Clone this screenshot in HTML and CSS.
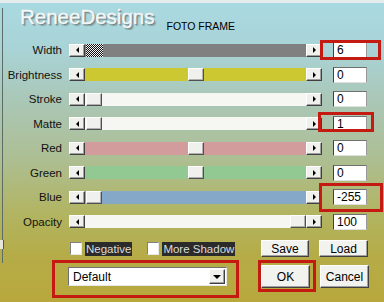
FILE: index.html
```html
<!DOCTYPE html>
<html>
<head>
<meta charset="utf-8">
<link rel="stylesheet" href="styles.css">
</head>
<body>
<div class="dialog">
  <div class="topstrip"></div>
  <div class="header">
    <span class="brand">ReneeDesigns</span>
    <span class="subtitle">FOTO FRAME</span>
  </div>
  <div class="sliders">
    <div class="row">
      <span class="lbl">Width</span>
      <div class="slider"><span class="arrow left"></span><div class="track t-gray"><span class="thumb checker" style="margin-left:1px"></span></div><span class="arrow right"></span></div>
      <span class="field">6</span>
    </div>
    <div class="row">
      <span class="lbl">Brightness</span>
      <div class="slider"><span class="arrow left"></span><div class="track t-yellow"><span class="thumb" style="margin-left:103px"></span></div><span class="arrow right"></span></div>
      <span class="field">0</span>
    </div>
    <div class="row">
      <span class="lbl">Stroke</span>
      <div class="slider"><span class="arrow left"></span><div class="track t-white"><span class="thumb" style="margin-left:1px"></span></div><span class="arrow right"></span></div>
      <span class="field">0</span>
    </div>
    <div class="row">
      <span class="lbl">Matte</span>
      <div class="slider"><span class="arrow left"></span><div class="track t-white"><span class="thumb" style="margin-left:1px"></span></div><span class="arrow right"></span></div>
      <span class="field">1</span>
    </div>
    <div class="row">
      <span class="lbl">Red</span>
      <div class="slider"><span class="arrow left"></span><div class="track t-red"><span class="thumb" style="margin-left:103px"></span></div><span class="arrow right"></span></div>
      <span class="field">0</span>
    </div>
    <div class="row">
      <span class="lbl">Green</span>
      <div class="slider"><span class="arrow left"></span><div class="track t-green"><span class="thumb" style="margin-left:103px"></span></div><span class="arrow right"></span></div>
      <span class="field">0</span>
    </div>
    <div class="row">
      <span class="lbl">Blue</span>
      <div class="slider"><span class="arrow left"></span><div class="track t-blue"><span class="thumb" style="margin-left:1px"></span></div><span class="arrow right"></span></div>
      <span class="field">-255</span>
    </div>
    <div class="row">
      <span class="lbl">Opacity</span>
      <div class="slider"><span class="arrow left"></span><div class="track t-white"><span class="thumb" style="margin-left:205px"></span></div><span class="arrow right"></span></div>
      <span class="field">100</span>
    </div>
  </div>
  <div class="options">
    <div class="checks">
      <span class="check"><span class="box"></span><span class="clabel">Negative</span></span>
      <span class="check"><span class="box"></span><span class="clabel">More Shadow</span></span>
    </div>
    <div class="btns">
      <span class="btn">Save</span>
      <span class="btn">Load</span>
    </div>
  </div>
  <div class="actions">
    <div class="combo">
      <span class="combo-text">Default</span>
      <span class="combo-btn"><span class="tri-down"></span></span>
    </div>
    <div class="btns big">
      <span class="btn">OK</span>
      <span class="btn">Cancel</span>
    </div>
  </div>
  <div class="mark m-width"></div>
  <div class="mark m-matte"></div>
  <div class="mark m-blue"></div>
  <div class="mark m-combo"></div>
  <div class="mark m-ok"></div>
</div>
</body>
</html>
```
FILE: styles.css
```css
* { box-sizing: border-box; }
html, body { margin: 0; padding: 0; }
body {
  font-family: "Liberation Sans", Arial, sans-serif;
  font-size: 11px;
  color: #000;
}
.dialog {
  position: relative;
  width: 384px;
  height: 302px;
  overflow: hidden;
  background: linear-gradient(to bottom,
    #a9dae2 0px, #a9d3d6 50px, #aac6b4 105px, #adbe92 160px,
    #b1b564 210px, #b5ac48 255px, #b8a83c 302px);
}
.dialog::before {
  content: "";
  position: absolute;
  left: 2px; top: 8px;
  width: 1px; height: 255px;
  background: #5c6c66;
}
.dialog::after {
  content: "";
  position: absolute;
  left: 0; top: 240px;
  width: 3px; height: 9px;
  background: #e6e6dc;
  border-right: 1px solid #555;
}
.topstrip {
  height: 3px;
  background: #e4ecec;
}
.header {
  display: flex;
  align-items: flex-start;
  height: 34.75px;
  padding: 3px 0 0 20px;
}
.brand {
  font-size: 20.5px;
  line-height: 22px;
  color: #f6f9f9;
  -webkit-text-stroke: 0.4px #eef3f3;
  text-shadow: 1px 1px 0 #6f7f7f, 2px 2px 1px rgba(60,70,70,0.35);
}
.subtitle {
  margin: 14px 0 0 12px;
  font-size: 10.5px;
  line-height: 12px;
}
.sliders { display: flex; flex-direction: column; }
.row {
  display: flex;
  align-items: center;
  height: 24.5px;
}
.lbl {
  width: 62px;
  margin-right: 7px;
  text-align: right;
  color: #111;
  font-size: 11.5px;
}
.slider {
  width: 253px;
  height: 13px;
  margin-right: 11px;
  display: flex;
}
.arrow {
  width: 16px;
  height: 13px;
  background: #f0f0ec;
  border: 1px solid;
  border-color: #fff #404040 #404040 #fff;
  box-shadow: inset -1px -1px #a0a0a0;
  display: flex;
  align-items: center;
  justify-content: center;
}
.arrow::before {
  content: "";
  width: 0; height: 0;
  border-top: 3px solid transparent;
  border-bottom: 3px solid transparent;
}
.arrow.left::before { border-right: 3px solid #000; }
.arrow.right::before { border-left: 3px solid #000; }
.track {
  flex: 1;
  height: 13px;
  display: flex;
}
.t-gray { background: #808080; }
.t-yellow { background: #cbc832; }
.t-white { background: #f6f6f2; }
.t-red { background: #d29c9c; }
.t-green { background: #92c892; }
.t-blue { background: #86a8c8; }
.thumb {
  width: 16px;
  height: 13px;
  background: #f0f0ec;
  border: 1px solid;
  border-color: #fff #505050 #505050 #fff;
  box-shadow: inset -1px -1px #b0b0b0;
}
.thumb.checker {
  width: 17px;
  border: none;
  box-shadow: none;
  background: repeating-conic-gradient(#111 0 25%, #f4f4f4 0 50%) 0 0 / 2px 2px;
}
.field {
  width: 34px;
  height: 16px;
  background: #fff;
  border: 1px solid;
  border-color: #707070 #9a9a9a #e0e0e0 #404040;
  font-size: 12px;
  line-height: 14px;
  padding-left: 3px;
}
.options {
  display: flex;
  align-items: center;
  height: 17px;
  margin-top: 6.25px;
}
.checks {
  display: flex;
  align-items: center;
  width: 261px;
  padding-left: 70px;
  gap: 15px;
}
.check {
  display: flex;
  align-items: center;
  gap: 3px;
}
.box {
  width: 12px;
  height: 13px;
  background: #fff;
  border: 1px solid;
  border-color: #808080 #e8e8e8 #e8e8e8 #808080;
}
.clabel {
  background: #2b2b2b;
  color: #dcdcdc;
  height: 14px;
  line-height: 14px;
  padding: 0 1px;
  font-size: 11.5px;
}
.btns {
  display: flex;
  gap: 10px;
}
.btn {
  width: 48px;
  height: 17px;
  background: #f2f2ee;
  border: 1px solid;
  border-color: #fff #404040 #404040 #fff;
  box-shadow: inset -1px -1px #a0a0a0;
  display: flex;
  align-items: center;
  justify-content: center;
  font-size: 12px;
}
.btns .btn:last-child { width: 49px; }
.actions {
  display: flex;
  align-items: center;
  height: 23px;
  margin-top: 8px;
}
.combo {
  margin-left: 68px;
  width: 159px;
  height: 19px;
  margin-right: 34px;
  background: #fff;
  border: 1px solid;
  border-color: #707070 #e8e8e8 #e8e8e8 #707070;
  display: flex;
  align-items: center;
  justify-content: space-between;
  padding: 0 1px 0 4px;
}
.combo-text { font-size: 12px; }
.combo-btn {
  width: 16px;
  height: 15px;
  background: #f0f0ec;
  border: 1px solid;
  border-color: #fff #404040 #404040 #fff;
  box-shadow: inset -1px -1px #a0a0a0;
  display: flex;
  align-items: center;
  justify-content: center;
}
.tri-down {
  width: 0; height: 0;
  border-left: 4px solid transparent;
  border-right: 4px solid transparent;
  border-top: 4px solid #000;
}
.big .btn { height: 23px; width: 49px; }
.mark {
  position: absolute;
  border: 3px solid #c41a12;
}
.m-width { left: 320px; top: 40px; width: 61px; height: 20px; }
.m-matte { left: 318px; top: 112px; width: 56px; height: 20px; }
.m-blue { left: 319px; top: 183px; width: 64px; height: 29px; }
.m-combo { left: 52px; top: 260px; width: 187px; height: 38px; }
.m-ok { left: 258px; top: 260px; width: 58px; height: 32px; }
```
